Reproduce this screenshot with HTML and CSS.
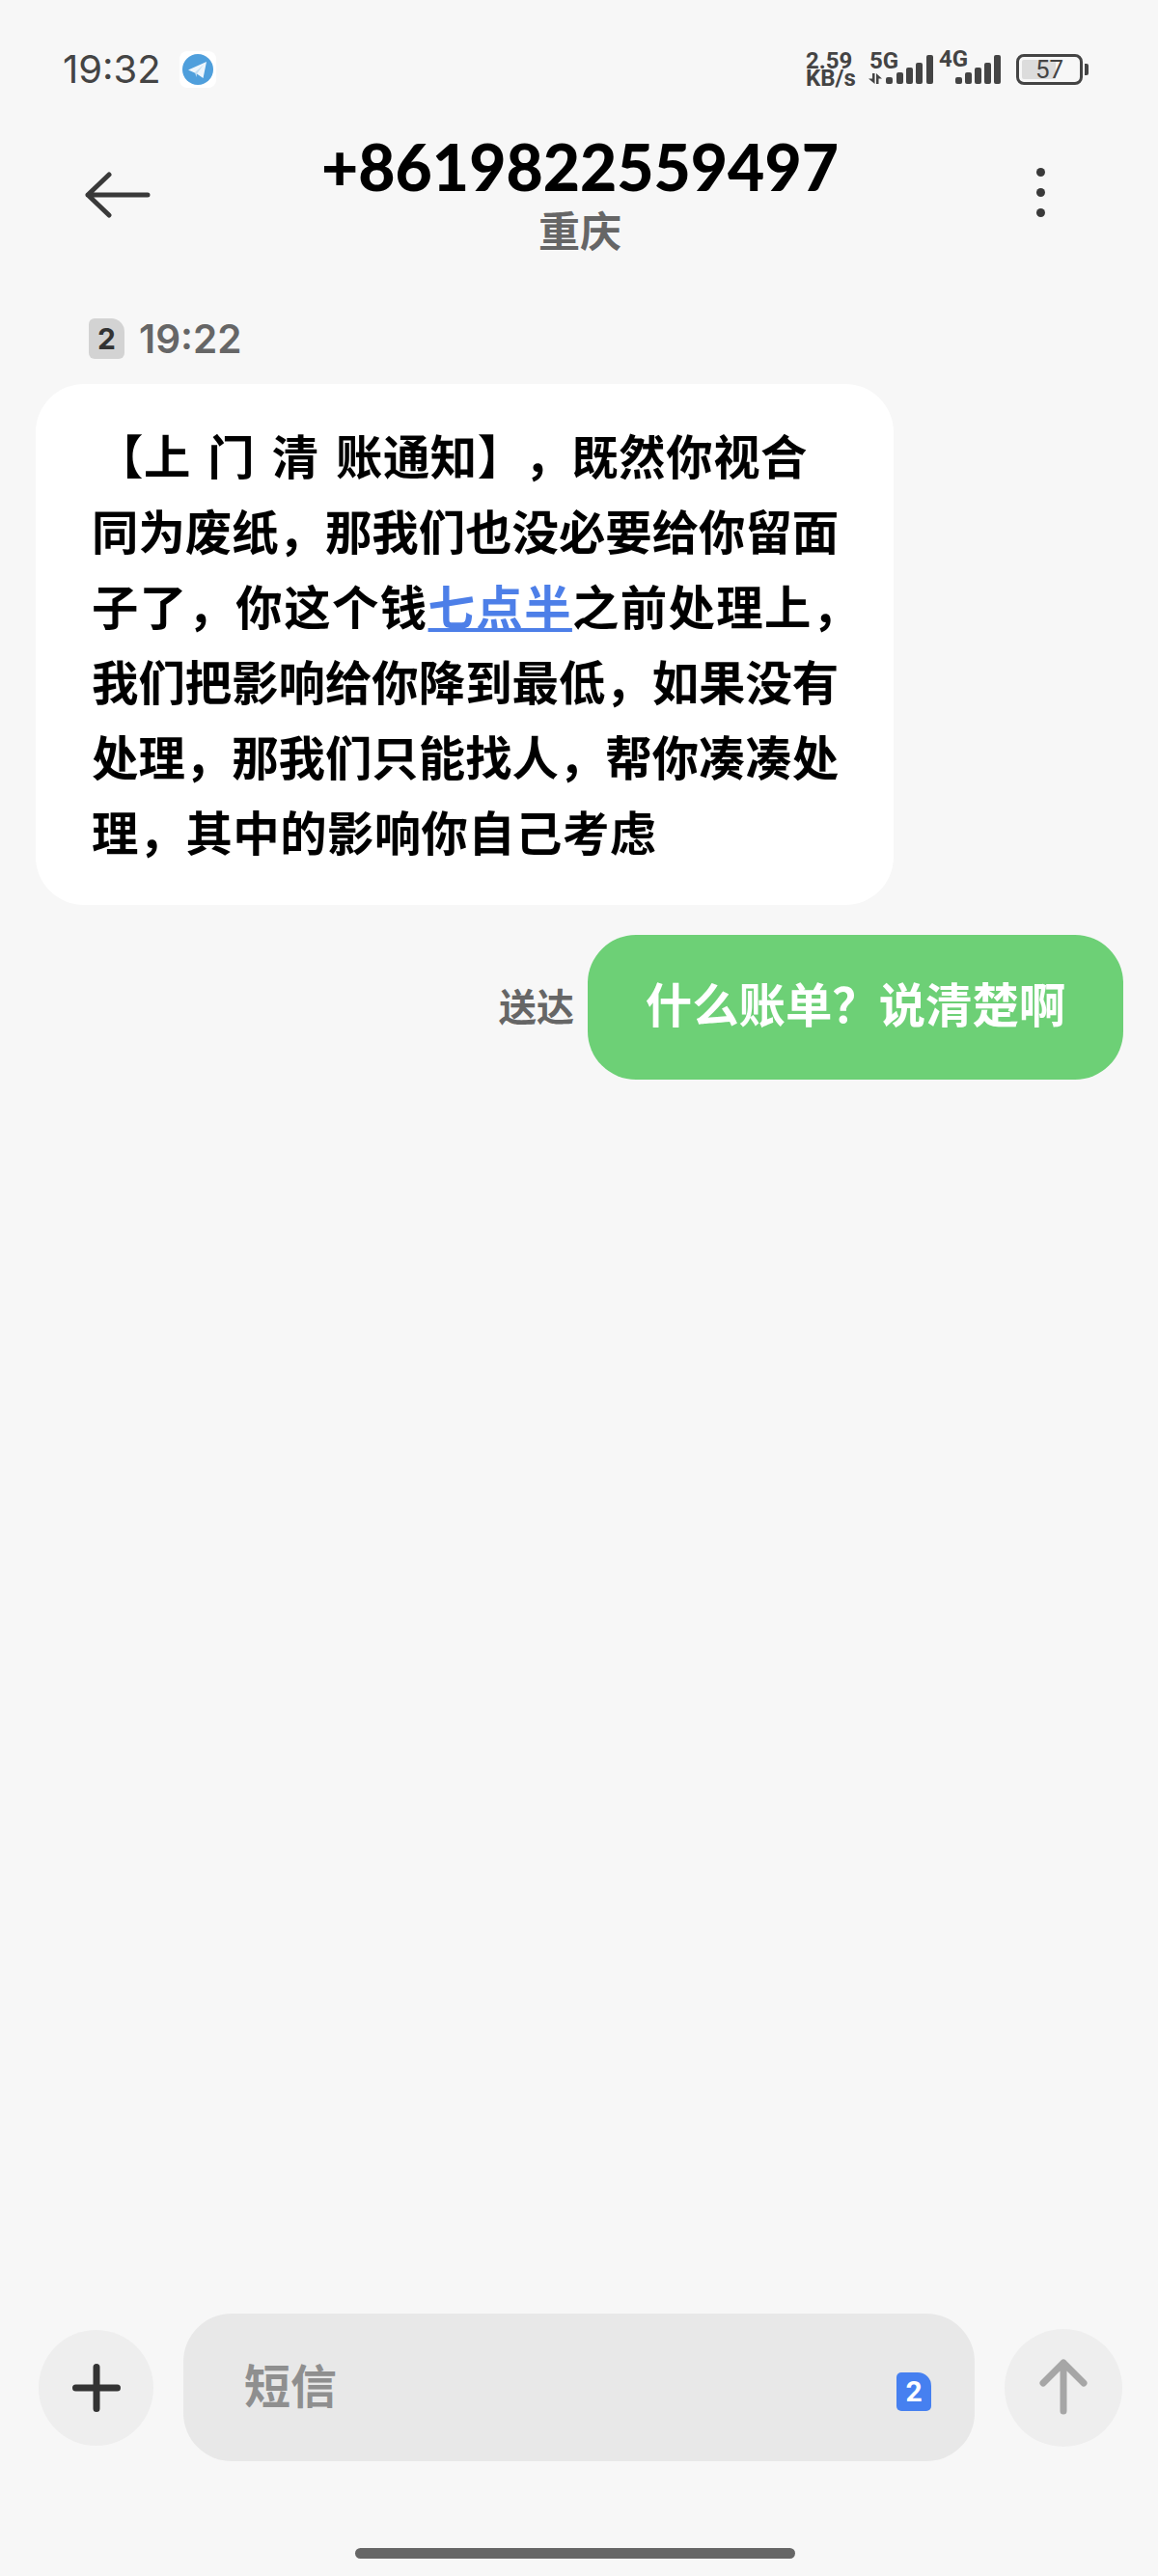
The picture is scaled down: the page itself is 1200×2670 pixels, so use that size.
FILE: index.html
```html
<!DOCTYPE html>
<html lang="zh-CN">
<head>
    <meta charset="UTF-8">
    <title>短信</title>
    <link rel="stylesheet" href="styles.css">
</head>
<body>
    <div class="screen">
        <div class="status-bar">
            <div class="status-left">
                <span class="clock">19:32</span>
                <span class="app-badge">
                    <svg width="32" height="32" viewBox="0 0 32 32">
                        <circle cx="16" cy="16" r="16" fill="#4f9fdc"/>
                        <path d="M6 16.5 L25 8 L21.5 25 L15 20.5 Z" fill="#eef6fc"/>
                        <path d="M13 19 L22 11 L15 20.5 L14.5 24 Z" fill="#c5dff2"/>
                    </svg>
                </span>
            </div>
            <div class="status-right">
                <div class="net-speed"><span>2.59</span><span>KB/s</span></div>
                <div class="signal signal-5g">
                    <span class="net-label">5G</span>
                    <svg width="70" height="30" viewBox="0 0 70 30">
                        <path d="M7 19 H9.5 V30 L3 24.5 H7 Z M11 19 L17 24.5 H13.5 V30 H11 Z" fill="#444"/>
                        <rect x="21" y="23" width="7" height="7" rx="2" fill="#444"/>
                        <rect x="32" y="18" width="7" height="12" rx="2" fill="#444"/>
                        <rect x="42" y="13" width="7" height="17" rx="2" fill="#444"/>
                        <rect x="52" y="8" width="7" height="22" rx="2" fill="#444"/>
                        <rect x="63" y="0" width="7" height="30" rx="2" fill="#444"/>
                    </svg>
                </div>
                <div class="signal signal-4g">
                    <span class="net-label">4G</span>
                    <svg width="47" height="30" viewBox="0 0 47 30">
                        <rect x="0" y="23" width="7" height="7" rx="2" fill="#444"/>
                        <rect x="10" y="18" width="7" height="12" rx="2" fill="#444"/>
                        <rect x="20" y="13" width="7" height="17" rx="2" fill="#444"/>
                        <rect x="30" y="8" width="7" height="22" rx="2" fill="#444"/>
                        <rect x="40" y="0" width="7" height="30" rx="2" fill="#444"/>
                    </svg>
                </div>
                <div class="battery">
                    <div class="battery-body">
                        <div class="battery-level"></div>
                        <span class="battery-text">57</span>
                    </div>
                    <div class="battery-nub"></div>
                </div>
            </div>
        </div>

        <div class="title-bar">
            <svg class="back-icon" width="68" height="48" viewBox="0 0 68 48">
                <path d="M25 3 L3 24 L25 45 M3 24 H65" fill="none" stroke="#3a3a3a" stroke-width="5" stroke-linecap="round" stroke-linejoin="round"/>
            </svg>
            <div class="contact">
                <div class="contact-number">+8619822559497</div>
                <div class="contact-place">重庆</div>
            </div>
            <div class="more-icon"><span></span><span></span><span></span></div>
        </div>

        <div class="messages">
            <div class="msg-time">
                <span class="sim-tag">2</span>
                <span>19:22</span>
            </div>
            <div class="bubble bubble-in">
                <p class="first-line">【上 门 清 账通知】，既然你视合</p>
                <p>同为废纸，那我们也没必要给你留面</p>
                <p class="wide-line">子了，你这个钱<a href="#">七点半</a>之前处理上，</p>
                <p>我们把影响给你降到最低，如果没有</p>
                <p>处理，那我们只能找人，帮你凑凑处</p>
                <p class="last-line">理，其中的影响你自己考虑</p>
            </div>
            <div class="sent-row">
                <span class="sent-state">送达</span>
                <div class="bubble bubble-out">什么账单？说清楚啊</div>
            </div>
        </div>

        <div class="composer">
            <div class="round-btn">
                <svg width="54" height="54" viewBox="0 0 54 54">
                    <path d="M27 5.5 V48.5 M5.5 27 H48.5" fill="none" stroke="#333" stroke-width="7" stroke-linecap="round"/>
                </svg>
            </div>
            <div class="input-box">
                <span class="placeholder">短信</span>
                <span class="sim-chip">2</span>
            </div>
            <div class="round-btn send-btn">
                <svg width="54" height="62" viewBox="0 0 54 62">
                    <path d="M27 55 V5 M6 26 L27 5 L48 26" fill="none" stroke="#a6a6a6" stroke-width="7" stroke-linecap="round" stroke-linejoin="round"/>
                </svg>
            </div>
        </div>

        <div class="home-indicator"></div>
    </div>
</body>
</html>
```

FILE: styles.css
```css
html, body {
    margin: 0;
    padding: 0;
}

body {
    font-family: "Noto Sans CJK SC", "Noto Sans", sans-serif;
    background-color: #f7f7f7;
    text-spacing-trim: space-all;
}

p {
    margin: 0;
}

.screen {
    width: 1200px;
    height: 2670px;
    display: flex;
    flex-direction: column;
    overflow: hidden;
}

/* status bar */
.status-bar {
    display: flex;
    justify-content: space-between;
    align-items: center;
    height: 38px;
    padding: 53px 72px 0 65px;
}

.status-left {
    display: flex;
    align-items: center;
    gap: 19px;
}

.clock {
    font-family: Inter, sans-serif;
    font-size: 40px;
    line-height: 38px;
    color: #444;
}

.app-badge {
    display: flex;
    padding: 3px;
    background-color: #fff;
    border-radius: 8px;
}

.status-right {
    display: flex;
    align-items: center;
    color: #444;
}

.net-speed {
    display: flex;
    flex-direction: column;
    width: 62px;
    font-family: Roboto, sans-serif;
    font-size: 24px;
    font-weight: 700;
    line-height: 18px;
}

.signal {
    position: relative;
    display: flex;
    align-items: flex-end;
}

.signal-5g {
    margin-right: 6px;
}

.net-label {
    position: absolute;
    left: 4px;
    top: -4px;
    font-family: Roboto, sans-serif;
    font-size: 24px;
    font-weight: 700;
    line-height: 20px;
}

.signal-4g {
    margin-right: 16px;
    padding-left: 17px;
}

.signal-4g .net-label {
    left: 0;
    top: -6px;
}

.battery {
    display: flex;
    align-items: center;
    gap: 2px;
}

.battery-body {
    position: relative;
    width: 63px;
    height: 26px;
    border: 3px solid #444;
    border-radius: 8px;
    display: flex;
    align-items: center;
    justify-content: center;
    overflow: hidden;
}

.battery-level {
    position: absolute;
    left: 3px;
    top: 3px;
    bottom: 3px;
    width: 35px;
    background-color: #dcdcdc;
    border-radius: 2px;
}

.battery-text {
    position: relative;
    font-family: Roboto, sans-serif;
    font-size: 26px;
    color: #444;
}

.battery-nub {
    width: 4px;
    height: 12px;
    background-color: #444;
    border-radius: 0 2px 2px 0;
}

/* title */
.title-bar {
    position: relative;
    display: flex;
    justify-content: center;
    height: 126px;
    margin-top: 42px;
    padding-left: 2px;
}

.back-icon {
    position: absolute;
    left: 88px;
    top: 45px;
}

.more-icon {
    position: absolute;
    left: 1074px;
    top: 41px;
    display: flex;
    flex-direction: column;
    gap: 12px;
}

.more-icon span {
    width: 9px;
    height: 9px;
    background-color: #3a3a3a;
    border-radius: 50%;
}

.contact {
    text-align: center;
}

.contact-number {
    font-family: Lato, sans-serif;
    font-size: 66px;
    font-weight: 900;
    line-height: 80px;
    color: #000;
}

.contact-place {
    font-size: 43px;
    font-weight: 700;
    line-height: 48px;
    color: #666;
}

/* messages */
.messages {
    flex: 1;
    padding: 0 36px 0 37px;
    display: flex;
    flex-direction: column;
}

.msg-time {
    display: flex;
    align-items: center;
    gap: 15px;
    height: 46px;
    margin: 69px 0 24px 55px;
    font-family: Inter, sans-serif;
    font-size: 40.5px;
    font-weight: 600;
    color: #666;
}

.sim-tag {
    width: 37px;
    height: 42px;
    background-color: #d3d3d3;
    border-radius: 6px 14px 6px 6px;
    font-size: 30px;
    font-weight: 700;
    line-height: 42px;
    text-align: center;
    color: #333;
}

.bubble {
    font-size: 48.4px;
    font-weight: 700;
    box-sizing: border-box;
    border-radius: 50px;
}

.bubble-in {
    width: 889px;
    height: 540px;
    padding: 34px 0 0 58px;
    background-color: #fff;
    line-height: 78px;
    color: #000;
    white-space: nowrap;
}

.first-line {
    padding-left: 5px;
    letter-spacing: 0.5px;
    word-spacing: 6px;
}

.wide-line {
    letter-spacing: 1.4px;
}

.last-line {
    letter-spacing: 0.4px;
}

.bubble-in a {
    color: #4d7fe8;
}

.sent-row {
    display: flex;
    align-items: center;
    justify-content: flex-end;
    gap: 14px;
    margin-top: 31px;
}

.sent-state {
    font-size: 39px;
    font-weight: 700;
    line-height: 40px;
    margin-bottom: 6px;
    color: #666;
}

.bubble-out {
    width: 555px;
    height: 150px;
    background-color: #6dd076;
    color: #fff;
    line-height: 140px;
    text-align: center;
}

/* bottom input */
.composer {
    display: flex;
    align-items: center;
    height: 153px;
    padding: 0 37px 0 40px;
    gap: 31px;
}

.round-btn {
    flex: none;
    width: 119px;
    height: 120px;
    background-color: #eee;
    border-radius: 50%;
    display: flex;
    align-items: center;
    justify-content: center;
}

.send-btn {
    width: 122px;
    height: 122px;
}

.input-box {
    flex: 1;
    height: 153px;
    box-sizing: border-box;
    padding: 0 45px 0 63px;
    background-color: #e8e8e8;
    border-radius: 50px;
    display: flex;
    align-items: center;
    justify-content: space-between;
}

.placeholder {
    font-size: 48px;
    font-weight: 700;
    line-height: 60px;
    margin-bottom: 10px;
    color: #8f8f8f;
}

.sim-chip {
    width: 36px;
    height: 40px;
    margin-top: 9px;
    background-color: #4680f0;
    border-radius: 5px 14px 5px 5px;
    font-family: Roboto, sans-serif;
    font-size: 30px;
    font-weight: 700;
    line-height: 40px;
    text-align: center;
    color: #fff;
}

.home-indicator {
    flex: none;
    width: 456px;
    height: 11px;
    margin: 90px 0 18px 368px;
    background-color: #666;
    border-radius: 6px;
}
```
